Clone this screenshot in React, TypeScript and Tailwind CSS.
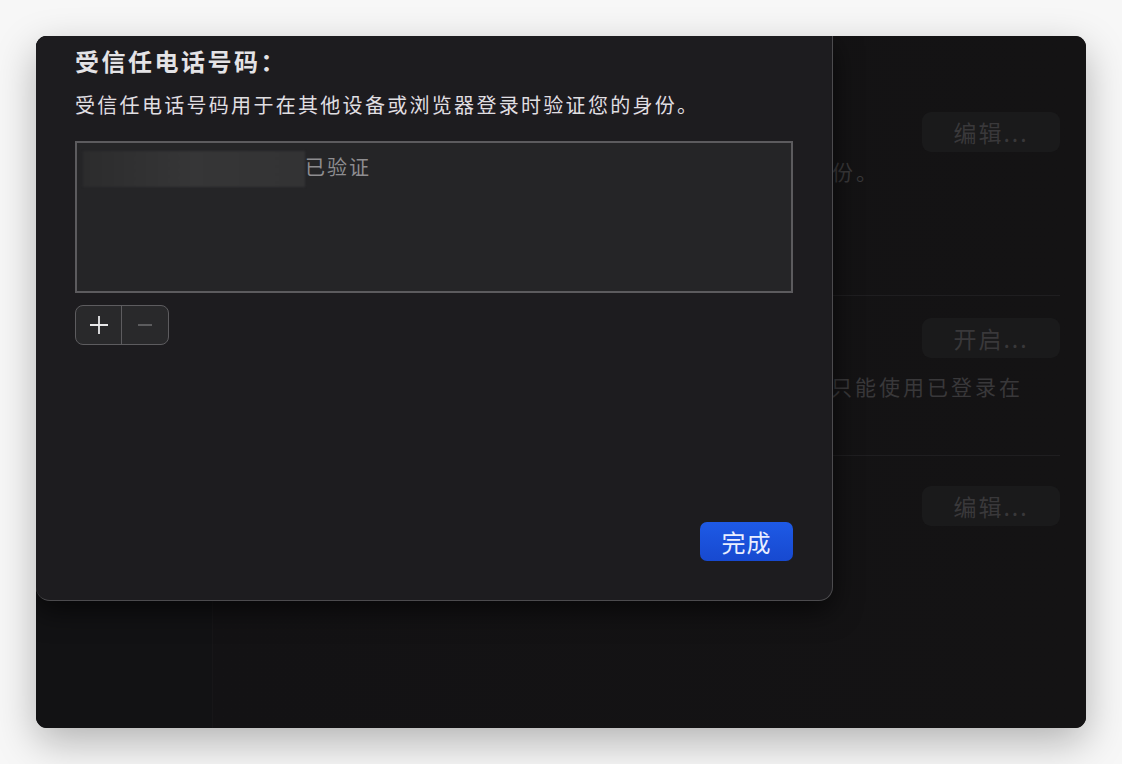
import React from 'react';

const font = { fontFamily: '"Noto Sans CJK SC", "Noto Sans", sans-serif' };

const GhostButton = ({ label }: { label: string }) => (
    <div className="w-[138px] h-[40px] rounded-[9px] bg-[#1a1a1b] flex items-center justify-center text-[23px] tracking-[2px] text-[#39383a] shrink-0">
        {label}
    </div>
);

const TrustedNumbersSheet = () => (
    <div className="absolute left-0 top-0 w-[797px] h-[565px] bg-[#1d1c1f] border border-t-0 border-l-0 border-[#4c4b4e] rounded-b-[14px] shadow-[0_10px_28px_rgba(0,0,0,0.6)] flex flex-col px-[39px] pt-[10px] pb-[39px]">
        <h2 className="text-[24px] font-bold tracking-[2.5px] leading-[30px] text-[#e4e3e6]">受信任电话号码：</h2>
        <p className="mt-[16px] text-[20px] tracking-[2.3px] leading-[26px] text-[#e0dfe2]">
            受信任电话号码用于在其他设备或浏览器登录时验证您的身份。
        </p>

        <div className="mt-[23px] w-[718px] h-[152px] border-2 border-[#5c5b5e] bg-[#252527] px-[6px] pt-[8px]">
            <div className="flex items-center">
                <div className="w-[222px] h-[36px] bg-gradient-to-r from-[#2c2c2d] via-[#363637] to-[#333334] blur-[1px]" />
                <span className="text-[20px] tracking-[2px] text-[#8e8d90] -mt-[4px]">已验证</span>
            </div>
        </div>

        <div className="mt-[12px] w-[94px] h-[40px] rounded-[8px] border border-[#5d5c5f] bg-[#29292b] flex overflow-hidden">
            <div className="w-[46px] h-full flex items-center justify-center border-r border-[#5d5c5f]">
                <svg width="22" height="22" viewBox="0 0 22 22">
                    <path d="M11 2v18M2 11h18" stroke="#e8e8ea" strokeWidth="1.8" />
                </svg>
            </div>
            <div className="flex-1 flex items-center justify-center">
                <svg width="16" height="4" viewBox="0 0 16 4">
                    <path d="M1 2h14" stroke="#5c5c5e" strokeWidth="1.8" />
                </svg>
            </div>
        </div>

        <div className="mt-auto flex justify-end">
            <div className="w-[93px] h-[39px] rounded-[7px] bg-gradient-to-b from-[#1e5ae6] to-[#1749d0] flex items-center justify-center text-[24px] tracking-[1px] text-[#e9eeff]">
                完成
            </div>
        </div>
    </div>
);

export default function App() {
    return (
        <div className="w-[1122px] h-[764px] bg-[#f7f7f7] p-[36px]" style={font}>
            <div className="relative w-[1050px] h-[692px] rounded-[11px] overflow-hidden bg-[#141314] shadow-[0_14px_40px_rgba(0,0,0,0.28)] flex">
                {/* sidebar of the window behind */}
                <div className="w-[177px] h-full bg-[#121214] border-r border-[#171618]" />

                {/* main pane behind the sheet */}
                <div className="flex-1 flex flex-col pr-[26px] text-[#39383a] bg-gradient-to-r from-[#131214] to-[#141314]">
                    <div className="h-[259px] flex flex-col">
                        <div className="flex justify-end pt-[76px]"><GhostButton label="编辑..." /></div>
                        <div className="text-right pr-[180px] pt-[4px] text-[21px] leading-[30px] tracking-[3px] whitespace-nowrap">
                            在其他设备或浏览器登录时验证您的身份。
                        </div>
                    </div>
                    <div className="h-px bg-[#1f1e20] ml-[30px]" />
                    <div className="h-[159px] flex flex-col">
                        <div className="flex justify-end pt-[22px]"><GhostButton label="开启..." /></div>
                        <div className="text-right pr-[37px] pt-[13px] text-[21px] leading-[30px] tracking-[3px] whitespace-nowrap">
                            若要更改，您只能使用已登录在
                        </div>
                    </div>
                    <div className="h-px bg-[#1f1e20] ml-[30px]" />
                    <div className="flex justify-end pt-[30px]">
                        <GhostButton label="编辑..." />
                    </div>
                </div>

                <TrustedNumbersSheet />
            </div>
        </div>
    );
}
